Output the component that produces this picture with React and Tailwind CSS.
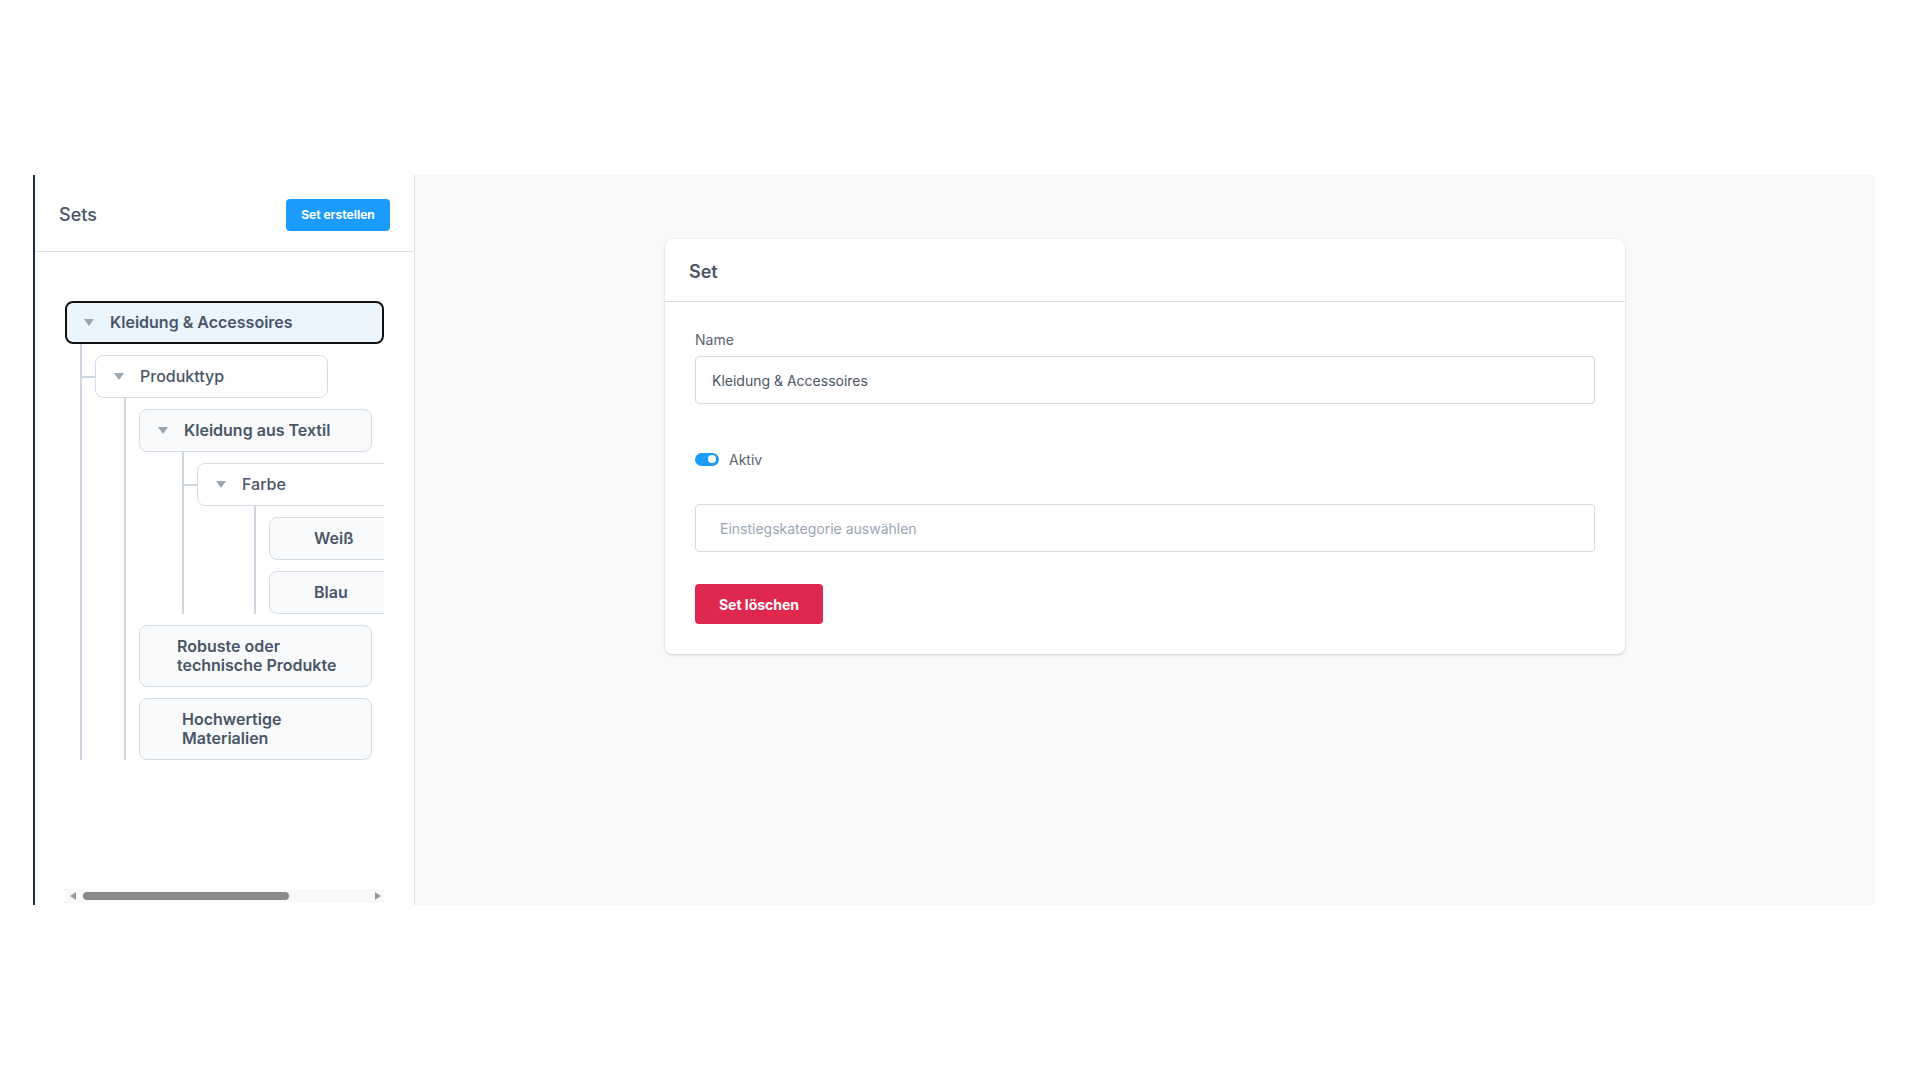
import React from "react";

const tree = {
  label: "Kleidung & Accessoires",
  children: [
    {
      label: "Produkttyp",
      stub: true,
      children: [
        {
          label: "Kleidung aus Textil",
          children: [
            {
              label: "Farbe",
              stub: true,
              children: [{ label: "Weiß" }, { label: "Blau" }],
            },
          ],
        },
        { label: "Robuste oder technische Produkte", pad: "pl-[37px]" },
        { label: "Hochwertige Materialien", pad: "pl-[42px]" },
      ],
    },
  ],
};

// offset of the connector line from the parent box, per depth
const lineMl = ["ml-[15px]", "ml-[29px]", "ml-[43px]", "ml-[57px]"];

const Caret = () => (
  <span className="w-0 h-0 shrink-0 border-x-[5px] border-x-transparent border-t-[7px] border-t-[#9ba5b3]" />
);

const NodeBox = ({ node, depth }) => {
  const hasKids = node.children && node.children.length > 0;

  if (depth === 0) {
    return (
      <div className="w-full flex items-center gap-4 rounded-lg border-2 border-[#111] bg-[#ebf5fe] py-[10px] pl-[17px] pr-4">
        <Caret />
        <span className="text-[16px] leading-[19px] font-semibold text-[#4a5568]">
          {node.label}
        </span>
      </div>
    );
  }

  const white = depth % 2 === 1;
  return (
    <div
      className={`w-[233px] shrink-0 flex items-center gap-4 rounded-lg border border-[#d5dce5] py-[11px] pr-4 ${
        white ? "bg-white" : "bg-[#f8fafc]"
      } ${hasKids ? "pl-[18px]" : node.pad || "pl-[44px]"}`}
    >
      {hasKids && <Caret />}
      <span
        className={`text-[16px] leading-[19px] text-[#4a5568] max-w-[165px] ${
          white ? "font-medium" : "font-semibold"
        }`}
      >
        {node.label}
      </span>
    </div>
  );
};

const TreeNode = ({ node, depth }) => (
  <div className={`flex flex-col shrink-0 ${depth === 0 ? "w-full" : ""}`}>
    <NodeBox node={node} depth={depth} />
    {node.children && (
      <div className={`flex flex-col ${lineMl[depth]} border-l-2 border-[#cfd8e2]`}>
        {node.children.map((child, i) => (
          <div key={i} className="flex mt-[11px]">
            <div className="w-[13px] shrink-0 h-[43px] flex items-center">
              {child.stub && <div className="h-[2px] w-full bg-[#cfd8e2]" />}
            </div>
            <TreeNode node={child} depth={depth + 1} />
          </div>
        ))}
      </div>
    )}
  </div>
);

export default function App() {
  return (
    <div className="w-[1920px] h-[1080px] bg-white pt-[175px] pl-[33px] pr-[45px] font-[Inter,sans-serif]">
      <div className="flex h-[730px]">
        {/* Sets sidebar */}
        <aside className="w-[382px] shrink-0 flex flex-col bg-white border-l-2 border-l-[#1e2a4b] border-r border-r-[#dde3ea]">
          <div className="h-[77px] shrink-0 flex items-center justify-between px-6 pt-[3px] border-b border-[#d6dde6]">
            <h2 className="text-[18px] font-medium text-[#4a5568]">Sets</h2>
            <button
              type="button"
              className="w-[104px] h-[32px] rounded-[4px] bg-[#1b9cfc] text-white text-[12px] font-bold"
            >
              Set erstellen
            </button>
          </div>
          <div className="flex-1 min-h-0 flex flex-col px-[30px] pt-[49px] pb-[2px]">
            <div className="flex-1 overflow-hidden">
              <TreeNode node={tree} depth={0} />
            </div>
            {/* horizontal scrollbar */}
            <div className="h-[14px] shrink-0 flex items-center bg-[#f9f9f9]">
              <span className="ml-[5px] w-0 h-0 border-y-[4px] border-y-transparent border-r-[6px] border-r-[#9a9a9a]" />
              <div className="ml-[7px] w-[206px] h-[8px] rounded-full bg-[#8b8b8b]" />
              <div className="flex-1" />
              <span className="mr-[3px] w-0 h-0 border-y-[4px] border-y-transparent border-l-[6px] border-l-[#9a9a9a]" />
            </div>
          </div>
        </aside>

        {/* Detail area */}
        <main className="flex-1 bg-[#f8f9fb] pt-[64px] flex justify-center items-start">
          <div className="w-[960px] bg-white rounded-lg shadow-[0_1px_3px_rgba(0,0,0,0.18)]">
            <div className="h-[63px] flex items-center pl-6 pt-[3px] border-b border-[#d5dce4]">
              <h3 className="text-[18px] font-semibold text-[#4a5568]">Set</h3>
            </div>
            <div className="px-[30px] pt-[28px] pb-[30px] flex flex-col">
              <label className="text-[14px] leading-[20px] text-[#5a6472]">Name</label>
              <div className="mt-[6px] h-[48px] flex items-center px-4 border border-[#d3dae3] rounded-[4px] text-[14px] text-[#4b5563]">
                Kleidung &amp; Accessoires
              </div>

              <div className="mt-[45px] h-[20px] flex items-center gap-[10px]">
                <span className="w-[24px] h-[13px] rounded-full bg-[#1b9cfc] flex items-center justify-end pr-[3px]">
                  <span className="w-[8px] h-[8px] rounded-full bg-white" />
                </span>
                <span className="text-[14px] text-[#5a6472]">Aktiv</span>
              </div>

              <div className="mt-[35px] h-[48px] flex items-center px-6 border border-[#d3dae3] rounded-[4px] text-[14px] text-[#9aa5b4]">
                Einstiegskategorie auswählen
              </div>

              <div className="mt-[32px]">
                <button
                  type="button"
                  className="w-[128px] h-[40px] rounded-[4px] bg-[#df2850] text-white text-[14px] font-bold"
                >
                  Set löschen
                </button>
              </div>
            </div>
          </div>
        </main>
      </div>
    </div>
  );
}
